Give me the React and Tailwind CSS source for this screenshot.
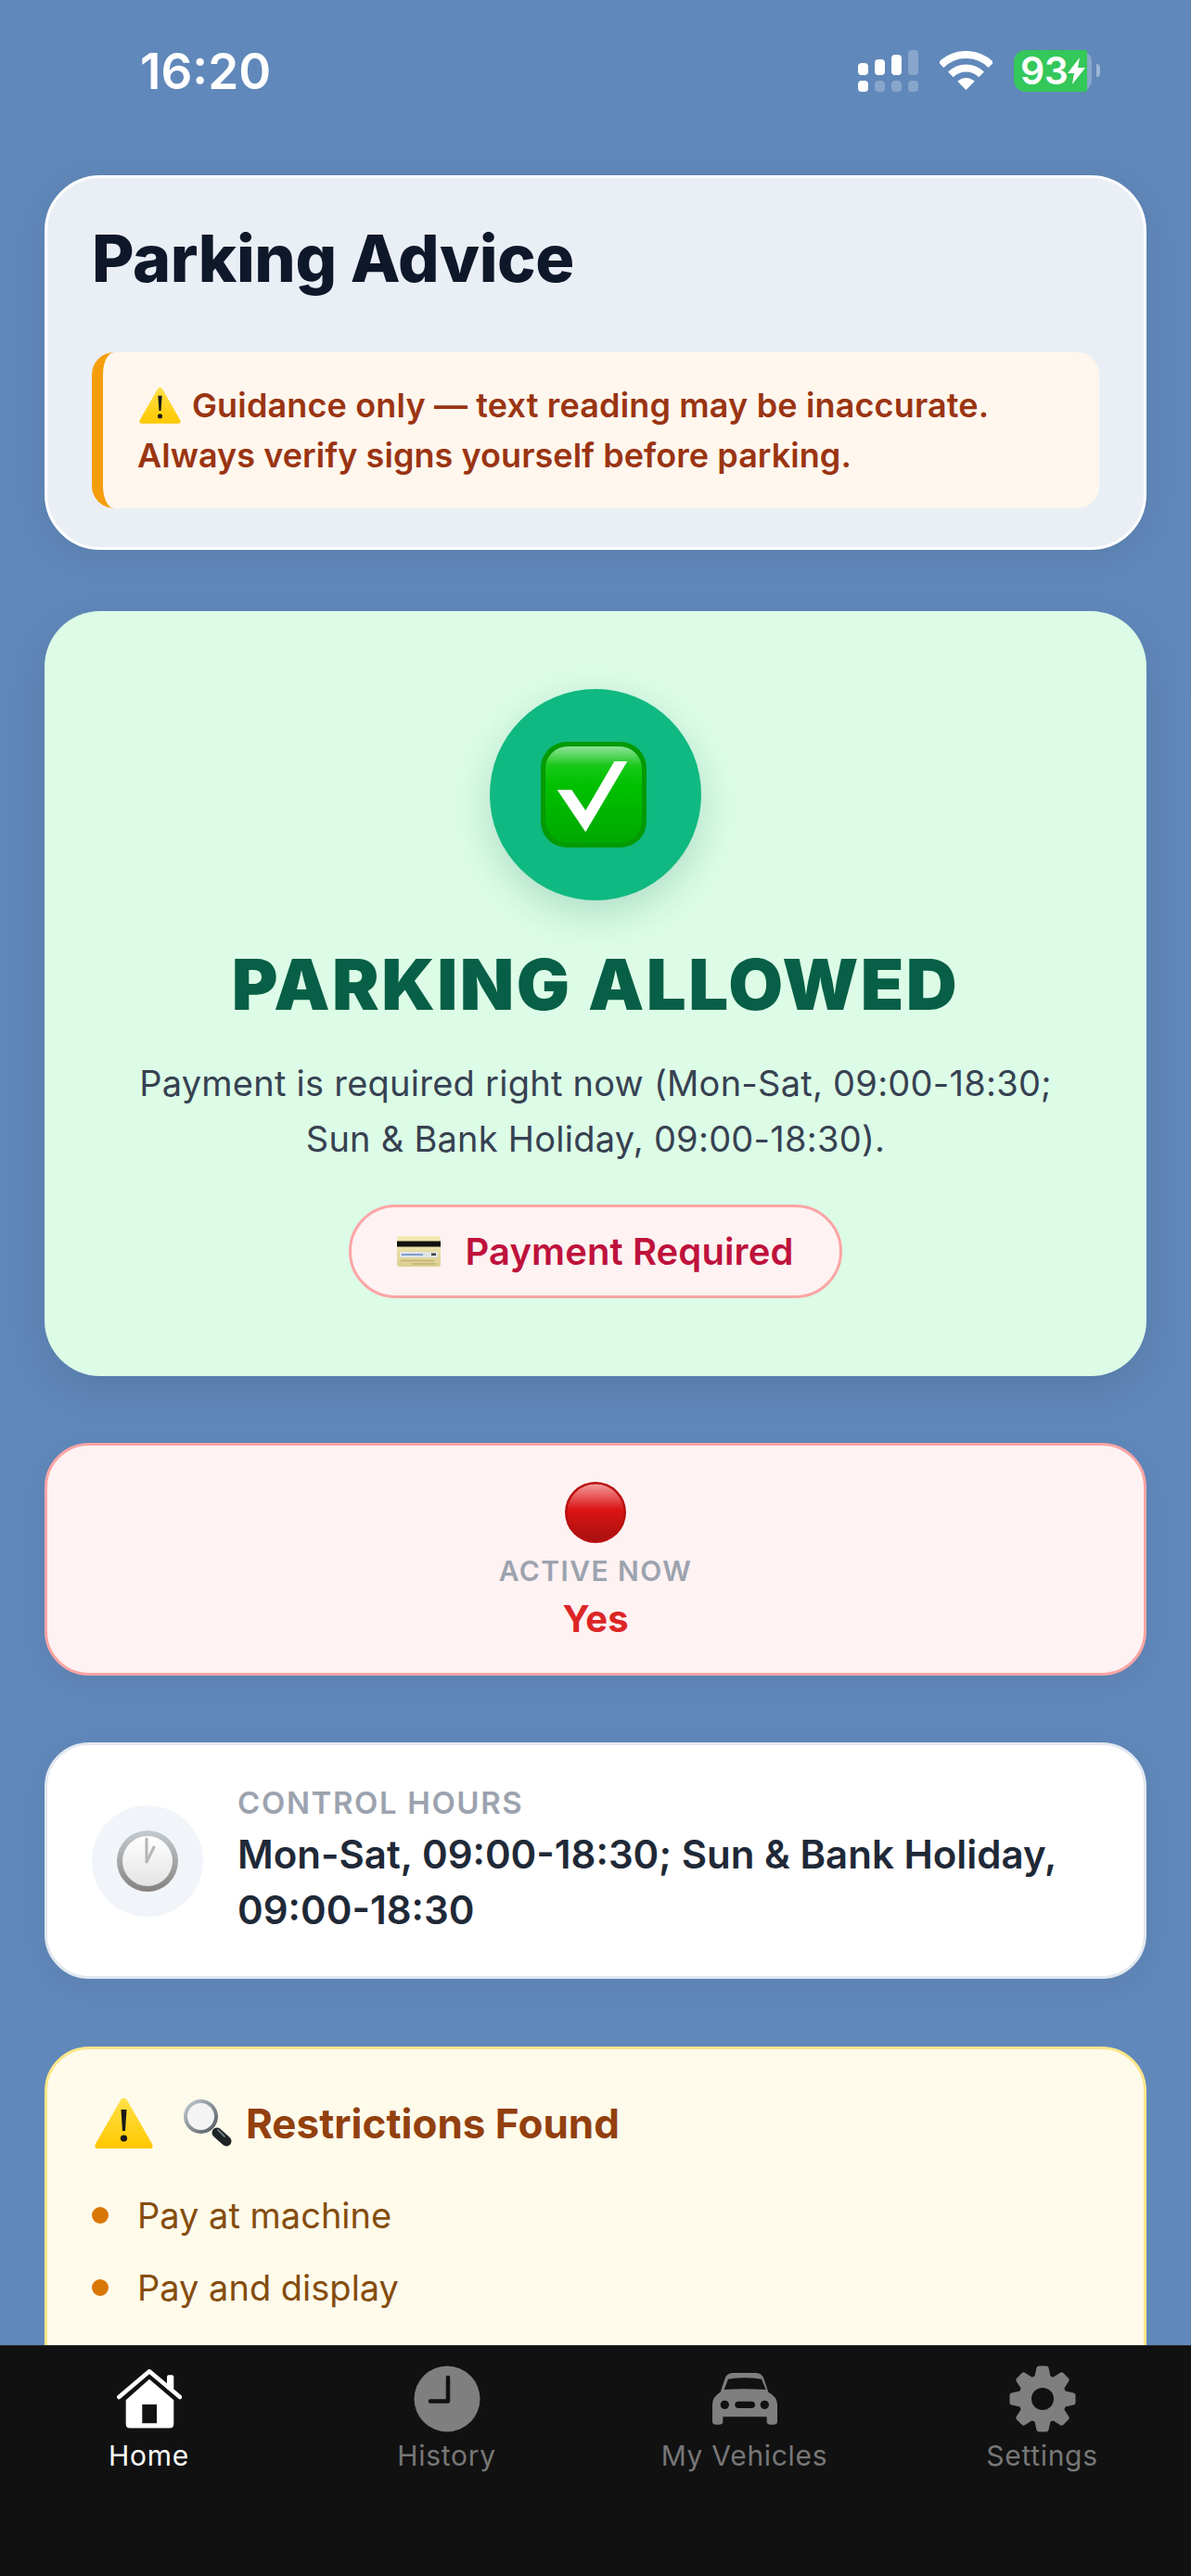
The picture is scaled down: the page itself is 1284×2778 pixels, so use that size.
import { Fragment } from "react";

// emoji are drawn, there is no colour emoji font in the sandbox
function WarnEmoji({ className }) {
  return (
    <svg viewBox="0 0 63 55" className={className}>
      <defs>
        <linearGradient id="warnFill" x1="0" y1="0" x2="0" y2="1">
          <stop offset="0" stopColor="#ffe047" />
          <stop offset="1" stopColor="#ffc800" />
        </linearGradient>
      </defs>
      <path
        d="M28.5 2 Q31.5 -0.5 34.5 2 L62 50 Q64 55 59 55 L4 55 Q-1 55 1 50 Z"
        fill="url(#warnFill)"
      />
      <path d="M28.5 13 L34.5 13 L33 36 L30 36 Z" fill="#1a1a1a" />
      <circle cx="31.5" cy="44" r="3.6" fill="#1a1a1a" />
    </svg>
  );
}

function CheckEmoji() {
  return (
    <svg viewBox="0 0 114 114" className="w-[114px] h-[114px]">
      <defs>
        <linearGradient id="checkFill" x1="0" y1="0" x2="0" y2="1">
          <stop offset="0" stopColor="#8fe39a" />
          <stop offset="0.2" stopColor="#18c818" />
          <stop offset="0.4" stopColor="#00c000" />
          <stop offset="1" stopColor="#00a800" />
        </linearGradient>
      </defs>
      <rect width="114" height="114" rx="28" fill="#049a04" />
      <rect x="5" y="5" width="104" height="104" rx="24" fill="url(#checkFill)" />
      <path d="M17.7 51.7 L33.3 51.7 L48.3 74 L79.3 21 L93.3 21 L48.3 97.3 Z" fill="#fff" />
    </svg>
  );
}

function CardEmoji() {
  return (
    <svg viewBox="0 0 47 33" className="w-[47px] h-[33px]">
      <defs>
        <linearGradient id="cardFill" x1="0" y1="0" x2="0" y2="1">
          <stop offset="0" stopColor="#f3e9b4" />
          <stop offset="1" stopColor="#dccf90" />
        </linearGradient>
      </defs>
      <rect width="47" height="33" rx="3" fill="url(#cardFill)" />
      <rect y="5.5" width="47" height="6" fill="#111" />
      <rect x="3" y="17" width="41" height="6" fill="#dfe4e6" />
      <path d="M5 20 H28" stroke="#7f9fd0" strokeWidth="2" />
      <rect x="37" y="18.5" width="5" height="2.5" fill="#444" />
      <path d="M4 26.5 H40 M16 30 H42" stroke="#bfb277" strokeWidth="1.5" />
    </svg>
  );
}

function RedCircleEmoji() {
  return (
    <svg viewBox="0 0 66 66" className="w-[66px] h-[66px]">
      <defs>
        <linearGradient id="redFill" x1="0" y1="0" x2="0" y2="1">
          <stop offset="0" stopColor="#f29a9a" />
          <stop offset="0.45" stopColor="#dc1414" />
          <stop offset="1" stopColor="#a91010" />
        </linearGradient>
      </defs>
      <circle cx="33" cy="33" r="33" fill="#b80f0f" />
      <circle cx="33" cy="33" r="30.5" fill="url(#redFill)" />
    </svg>
  );
}

function ClockEmoji() {
  return (
    <svg viewBox="0 0 66 66" className="w-[66px] h-[66px]">
      <defs>
        <linearGradient id="ringFill" x1="0" y1="0" x2="0" y2="1">
          <stop offset="0" stopColor="#c4ccd2" />
          <stop offset="1" stopColor="#85827e" />
        </linearGradient>
        <linearGradient id="faceFill" x1="0" y1="0" x2="0" y2="1">
          <stop offset="0" stopColor="#ffffff" />
          <stop offset="1" stopColor="#e4e4e4" />
        </linearGradient>
      </defs>
      <circle cx="33" cy="33" r="33" fill="url(#ringFill)" />
      <circle cx="33" cy="33" r="27" fill="url(#faceFill)" />
      <path d="M32 34 V9 M32 34 L40 18" stroke="#b5b5b5" strokeWidth="3" strokeLinecap="round" />
    </svg>
  );
}

function MagnifierEmoji() {
  return (
    <svg viewBox="0 0 53 51" className="w-[53px] h-[51px]">
      <defs>
        <linearGradient id="lensRing" x1="0" y1="0" x2="1" y2="1">
          <stop offset="0" stopColor="#c8d2da" />
          <stop offset="1" stopColor="#4d5358" />
        </linearGradient>
      </defs>
      <path d="M36 36 L46 45" stroke="#1d2326" strokeWidth="11" strokeLinecap="round" />
      <path d="M37 33 L44 40" stroke="#6c7a80" strokeWidth="2" strokeLinecap="round" />
      <circle cx="18.5" cy="18.5" r="18.5" fill="url(#lensRing)" />
      <circle cx="18.5" cy="18.5" r="14.5" fill="#f4f4f4" />
    </svg>
  );
}

function HomeIcon() {
  return (
    <svg viewBox="0 0 70 64" className="w-[70px] h-[64px]" fill="#fff">
      <path d="M2.3 30 L35 2.3 L68 30" fill="none" stroke="#fff" strokeWidth="4.5" strokeLinecap="round" strokeLinejoin="round" />
      <rect x="54" y="6.3" width="7.3" height="16" rx="2" />
      <path
        fillRule="evenodd"
        d="M35 10.7 L61.3 33.3 V59 Q61.3 63.5 57 63.5 H14 Q9.7 63.5 9.7 59 V33.3 Z M27.3 38 V58.3 H43 V38 Z"
      />
    </svg>
  );
}

function HistoryIcon() {
  return (
    <svg viewBox="0 0 72 72" className="w-[72px] h-[72px]">
      <circle cx="36" cy="36" r="35.5" fill="#7f7f7f" />
      <path d="M37 13 V38.5 H18" fill="none" stroke="#111" strokeWidth="4.5" strokeLinecap="round" strokeLinejoin="round" />
    </svg>
  );
}

function CarIcon() {
  return (
    <svg viewBox="84 88 210 168" className="w-[70px] h-[56px]">
      <path
        fillRule="evenodd"
        fill="#7f7f7f"
        d="M110 150 L125 105 Q130 90 150 88 Q187 85 225 88 Q245 90 250 105 L265 150 Q294 165 294 190 L294 245 Q294 255 285 255 L270 255 Q260 255 260 245 L260 230 L118 230 L118 245 Q118 255 108 255 L94 255 Q84 255 84 245 L84 190 Q84 165 110 150 Z M122 142 Q187 138 257 142 L243 108 Q187 100 135 108 Z"
      />
      <circle cx="124" cy="191" r="14" fill="#111" />
      <circle cx="253" cy="191" r="14" fill="#111" />
      <rect x="157" y="180" width="65" height="22" rx="11" fill="#111" />
    </svg>
  );
}

function GearIcon() {
  const angles = [0, 45, 90, 135, 180, 225, 270, 315];
  return (
    <svg viewBox="-36 -36 72 72" className="w-[72px] h-[72px]">
      {angles.map((a) => (
        <path
          key={a}
          transform={`rotate(${a})`}
          d="M-9 -22 L-6.5 -33.5 Q-6 -35.5 -4 -35.5 L4 -35.5 Q6 -35.5 6.5 -33.5 L9 -22 Z"
          fill="#7f7f7f"
        />
      ))}
      <circle r="26" fill="#7f7f7f" />
      <circle r="12" fill="#111" />
    </svg>
  );
}

function StatusBar() {
  return (
    <div className="h-[189px] pt-[45px] pl-[151px] pr-[98px] flex items-start justify-between text-white">
      <div className="text-[53px] leading-[64px] font-semibold">16:20</div>
      <div className="h-[62px] flex items-center">
        <div className="w-[65px] mr-[23px]">
          <div className="flex items-end gap-[7px] h-[27px]">
            <div className="w-[11px] h-[13px] rounded-[4px] bg-white" />
            <div className="w-[11px] h-[17px] rounded-[4px] bg-white" />
            <div className="w-[11px] h-[22px] rounded-[4px] bg-white" />
            <div className="w-[11px] h-[27px] rounded-[4px] bg-white/25" />
          </div>
          <div className="flex gap-[7px] mt-[6px]">
            <div className="w-[11px] h-[12px] rounded-[4px] bg-white" />
            <div className="w-[11px] h-[12px] rounded-[4px] bg-white/25" />
            <div className="w-[11px] h-[12px] rounded-[4px] bg-white/25" />
            <div className="w-[11px] h-[12px] rounded-[4px] bg-white/25" />
          </div>
        </div>
        <svg viewBox="0 0 57 42" className="w-[57px] h-[42px] mr-[23px]" fill="none" stroke="#fff" strokeWidth="8">
          <path d="M1.6 15.1 A38 38 0 0 1 55.4 15.1" />
          <path d="M11.9 25.4 A23.5 23.5 0 0 1 45.1 25.4" />
          <path d="M28.5 42 L19.3 32.8 A13 13 0 0 1 37.7 32.8 Z" fill="#fff" stroke="none" />
        </svg>
        <div className="w-[84px] h-[45px] rounded-[13px] bg-white/25">
          <div className="w-[79px] h-full rounded-l-[13px] rounded-r-[2px] bg-[#34c759] flex items-center pl-[7px]">
            <span className="text-[41px] leading-[45px] font-semibold tracking-[-0.5px]">93</span>
            <svg viewBox="0 0 19 29" className="w-[19px] h-[29px] shrink-0" fill="#fff">
              <path d="M13 0 L0 17 H7 L5 29 L19 11 H11 Z" />
            </svg>
          </div>
        </div>
        <div className="w-[4px] h-[14px] ml-[5px] rounded-r-full bg-white/40" />
      </div>
    </div>
  );
}

export default function App() {
  return (
    <div className="h-[2778px] overflow-hidden flex flex-col bg-[#6088ba] [font-family:Inter,'Noto_Sans',sans-serif]">
      <main className="flex-1 min-h-0 overflow-hidden">
        <StatusBar />

        <div className="px-[48px]">
          {/* disclaimer card */}
          <section className="h-[404px] rounded-[60px] border-[3px] border-white bg-[#eaeff6] px-[48px] pt-[45px] shadow-[0_8px_40px_rgba(0,0,0,0.08)]">
            <h1 className="text-[70px] leading-[84px] font-extrabold tracking-[-0.4px] text-[#0f172a]">Parking Advice</h1>
            <div className="mt-[59px] h-[168px] rounded-[24px] border-l-[12px] border-[#f59e0b] bg-[#fff7ed] pl-[37px] pt-[30px] text-[36px] leading-[54px] font-semibold tracking-[0.05px] text-[#9a3412]">
              <div className="flex items-center">
                <WarnEmoji className="w-[45px] h-[40px] mr-[12px] ml-[2px]" />
                <span className="tracking-[0.15px]">Guidance only — text reading may be inaccurate.</span>
              </div>
              <div>Always verify signs yourself before parking.</div>
            </div>
          </section>

          {/* verdict */}
          <section className="mt-[66px] rounded-[60px] bg-[#dcfce7] pt-[84px] pb-[84px] flex flex-col items-center shadow-[0_16px_48px_rgba(0,0,0,0.1)]">
            <div className="w-[228px] h-[228px] pr-[4px] rounded-full bg-[#10b981] flex items-center justify-center shadow-[0_14px_40px_rgba(16,120,80,0.22)]">
              <CheckEmoji />
            </div>
            <h2 className="mt-[45px] text-[76px] leading-[90px] font-black tracking-[2.4px] text-[#065f46]">PARKING ALLOWED</h2>
            <p className="mt-[32px] w-[1010px] text-center text-[38px] leading-[60px] tracking-[0.25px] text-[#374151]">
              Payment is required right now (Mon-Sat, 09:00-18:30; Sun &amp; Bank Holiday, 09:00-18:30).
            </p>
            <div className="mt-[41px] w-[532px] h-[101px] rounded-full border-[3px] border-[#fca5a5] bg-[#fef2f2] flex items-center justify-center gap-[26px]">
              <CardEmoji />
              <span className="text-[40px] font-semibold tracking-[0.1px] text-[#be123c]">Payment Required</span>
            </div>
          </section>

          {/* active now */}
          <section className="mt-[72px] h-[251px] rounded-[48px] border-[3px] border-[#fca5a5] bg-[#fef2f2] pt-[39px] flex flex-col items-center shadow-[0_8px_32px_rgba(0,0,0,0.06)]">
            <RedCircleEmoji />
            <div className="mt-[10px] text-[30px] leading-[40px] font-semibold tracking-[1.4px] text-[#9ca3af]">ACTIVE NOW</div>
            <div className="mt-[8px] text-[40px] leading-[48px] font-bold text-[#dc2626]">Yes</div>
          </section>

          {/* control hours */}
          <section className="mt-[72px] h-[255px] rounded-[48px] border-[3px] border-[#e2e8f0] bg-white px-[48px] flex items-center gap-[37px] shadow-[0_8px_32px_rgba(0,0,0,0.06)]">
            <div className="w-[120px] h-[120px] shrink-0 rounded-full bg-[#f1f5f9] flex items-center justify-center">
              <ClockEmoji />
            </div>
            <div>
              <div className="text-[33px] leading-[40px] font-semibold tracking-[1.6px] text-[#9ca3af]">CONTROL HOURS</div>
              <div className="mt-[6px] text-[42px] leading-[60px] font-semibold text-[#1f2937]">
                Mon-Sat, 09:00-18:30; Sun &amp; Bank Holiday,
                <br />
                09:00-18:30
              </div>
            </div>
          </section>

          {/* restrictions, runs under the tab bar */}
          <section className="mt-[73px] rounded-[48px] border-[3px] border-[#fde68a] bg-[#fffbeb] px-[48px] pt-[52px] pb-[160px]">
            <div className="flex items-center h-[55px]">
              <WarnEmoji className="w-[63px] h-[55px] ml-[3px] mr-[33px]" />
              <MagnifierEmoji />
              <h3 className="ml-[14px] text-[44px] font-bold text-[#92400e]">Restrictions Found</h3>
            </div>
            <ul className="mt-[33px] text-[38px] text-[#854d0e]">
              {["Pay at machine", "Pay and display"].map((item) => (
                <li key={item} className="h-[78px] flex items-center gap-[31px]">
                  <span className="w-[18px] h-[18px] rounded-full bg-[#d97706]" />
                  {item}
                </li>
              ))}
            </ul>
          </section>
        </div>
      </main>

      <nav className="h-[249px] shrink-0 bg-[#111111] border-t border-[#2a2a2a] grid grid-cols-4 pt-[21px] text-[30px] leading-[40px] tracking-[0.7px]">
        {[
          { label: "Home", icon: <HomeIcon />, color: "text-white" },
          { label: "History", icon: <HistoryIcon />, color: "text-[#777777]" },
          { label: "My Vehicles", icon: <CarIcon />, color: "text-[#777777]" },
          { label: "Settings", icon: <GearIcon />, color: "text-[#777777]" },
        ].map((tab) => (
          <Fragment key={tab.label}>
            <div className={`flex flex-col items-center ${tab.color}`}>
              <div className="h-[72px] flex items-center justify-center">{tab.icon}</div>
              <div className="mt-[5px]">{tab.label}</div>
            </div>
          </Fragment>
        ))}
      </nav>
    </div>
  );
}
